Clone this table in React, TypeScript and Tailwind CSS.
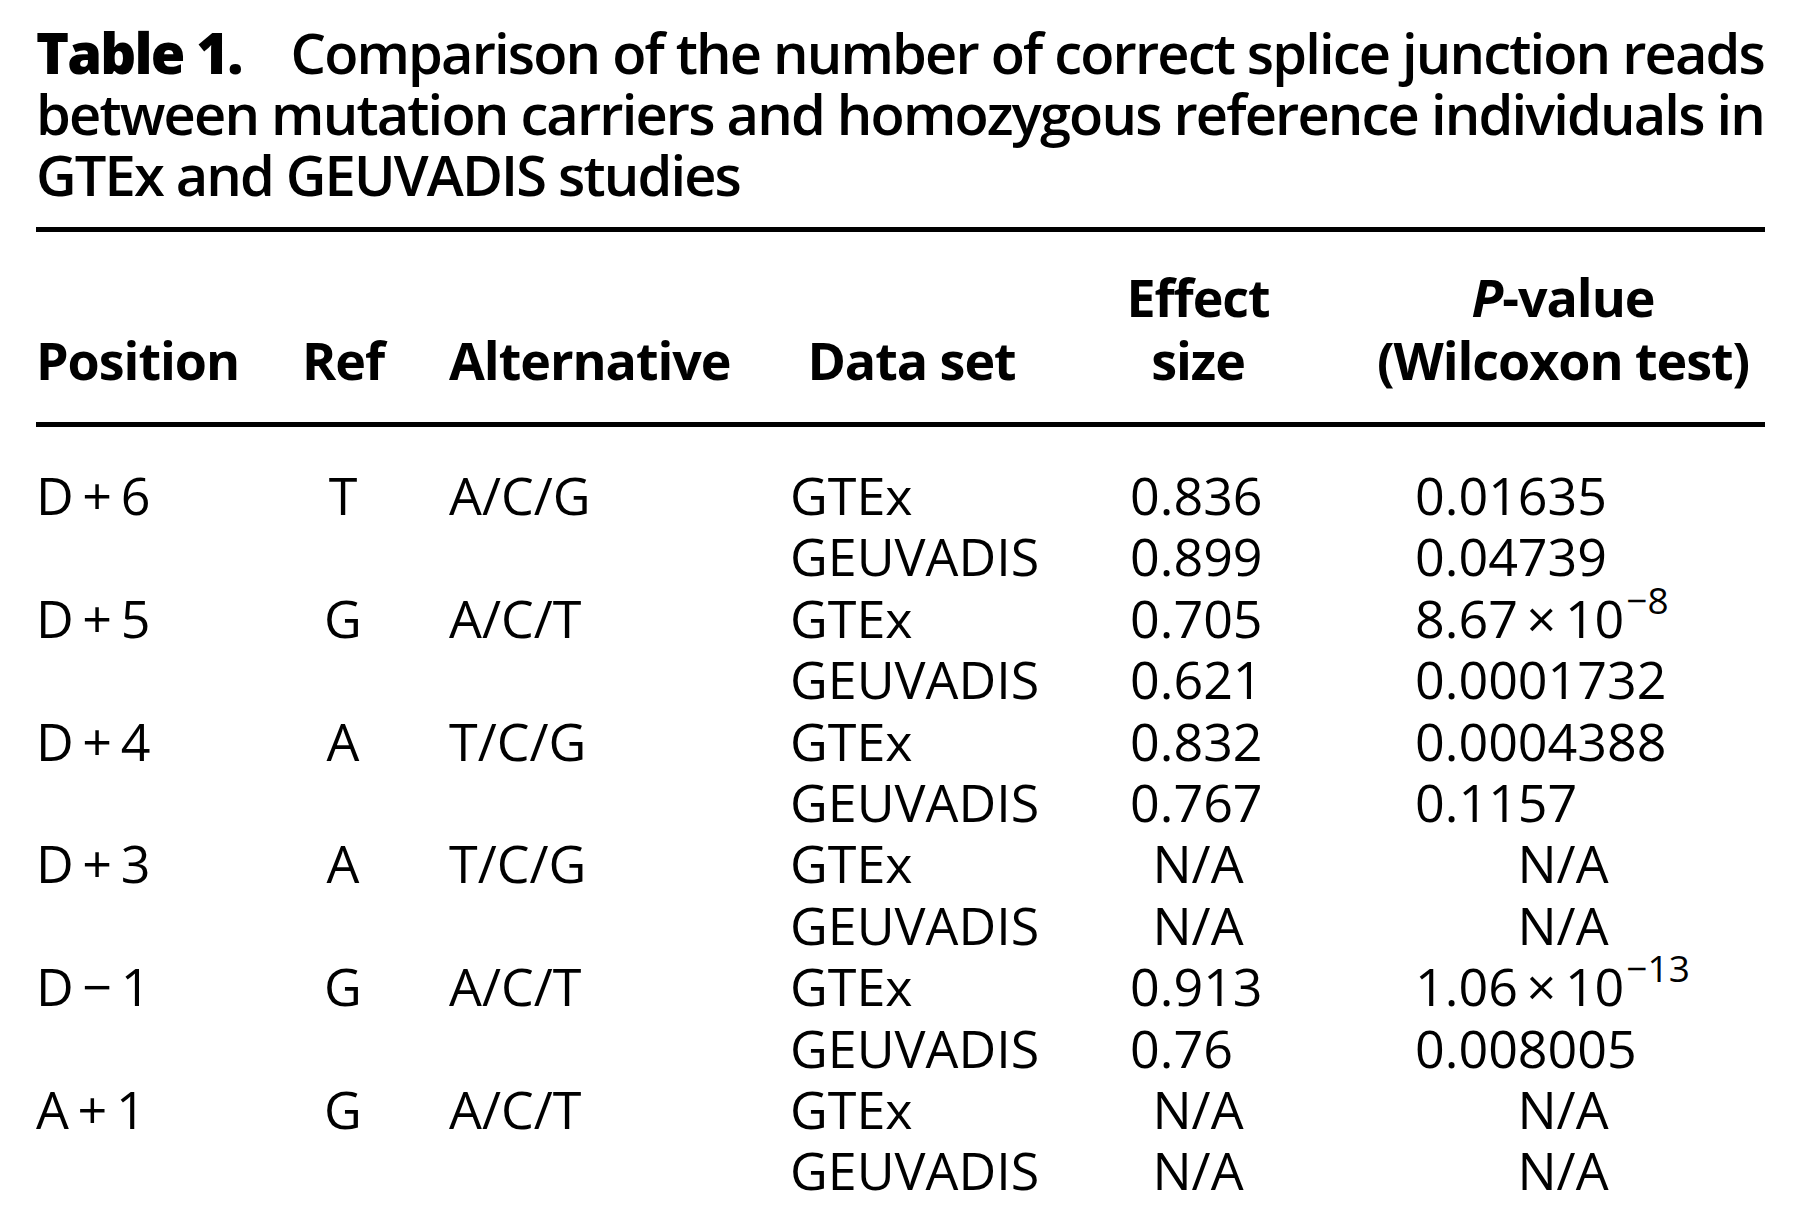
import type { ReactNode } from "react";

type Cell = { effect: string; p: ReactNode };
type Row = { pos: string; ref: string; alt: string; gtex: Cell; geuvadis: Cell };

const T = "\u2009";

function Sci({ m, e }: { m: string; e: string }) {
  return (
    <span>
      {m}
      {T}×{T}10
      <sup className="top-[-24px] ml-[2px] text-[37px]">{e}</sup>
    </span>
  );
}

const ROWS: Row[] = [
  { pos: `D${T}+${T}6`, ref: "T", alt: "A/C/G", gtex: { effect: "0.836", p: "0.01635" }, geuvadis: { effect: "0.899", p: "0.04739" } },
  { pos: `D${T}+${T}5`, ref: "G", alt: "A/C/T", gtex: { effect: "0.705", p: <Sci m="8.67" e="−8" /> }, geuvadis: { effect: "0.621", p: "0.0001732" } },
  { pos: `D${T}+${T}4`, ref: "A", alt: "T/C/G", gtex: { effect: "0.832", p: "0.0004388" }, geuvadis: { effect: "0.767", p: "0.1157" } },
  { pos: `D${T}+${T}3`, ref: "A", alt: "T/C/G", gtex: { effect: "N/A", p: "N/A" }, geuvadis: { effect: "N/A", p: "N/A" } },
  { pos: `D${T}−${T}1`, ref: "G", alt: "A/C/T", gtex: { effect: "0.913", p: <Sci m="1.06" e="−13" /> }, geuvadis: { effect: "0.76", p: "0.008005" } },
  { pos: `A${T}+${T}1`, ref: "G", alt: "A/C/T", gtex: { effect: "N/A", p: "N/A" }, geuvadis: { effect: "N/A", p: "N/A" } },
];

const GRID = "grid grid-cols-[264px_86px_404px_243px_330px_400px]";

function Values({ set, cell }: { set: string; cell: Cell }) {
  const na = cell.effect === "N/A";
  return (
    <>
      <div>{set}</div>
      <div className="flex justify-center">
        <div className={na ? "text-center" : "w-[136px]"}>{cell.effect}</div>
      </div>
      <div className={cell.p === "N/A" ? "text-center" : "pl-[52px]"}>{cell.p}</div>
    </>
  );
}

export default function App() {
  return (
    <div className="min-h-screen w-[1800px] bg-white px-[36px] pt-[22px] font-['Open_Sans',sans-serif] text-black">
      {/* caption, first two lines justified to the rule width */}
      <div className="w-[1728px] text-[56px] leading-[61px] font-semibold tracking-[-0.033em]">
        <div className="whitespace-nowrap [text-align-last:justify]">
          <span className="font-extrabold">Table 1.</span>
          <span className="inline-block w-[36px]" /> Comparison of the number of correct splice junction reads
        </div>
        <div className="whitespace-nowrap [text-align-last:justify]">
          between mutation carriers and homozygous reference individuals in
        </div>
        <div className="whitespace-nowrap">GTEx and GEUVADIS studies</div>
      </div>

      <div className="mt-[22px] h-[5px] w-[1729px] bg-black" />

      <div className={`${GRID} mt-[33px] items-end text-[52px] leading-[63px] font-bold tracking-[-0.02em]`}>
        <div>Position</div>
        <div className="text-center">Ref</div>
        <div className="pl-[63px]">Alternative</div>
        <div className="text-center">Data set</div>
        <div className="text-center">
          Effect
          <br />
          size
        </div>
        <div className="text-center">
          <i>P</i>-value
          <br />
          (Wilcoxon test)
        </div>
      </div>

      <div className="mt-[31px] h-[5px] w-[1729px] bg-black" />

      <div className={`${GRID} mt-[37px] text-[52px] leading-[61.4px]`}>
        {ROWS.map((r) => (
          <div key={r.pos} className="contents">
            <div>{r.pos}</div>
            <div className="text-center">{r.ref}</div>
            <div className="pl-[63px]">{r.alt}</div>
            <Values set="GTEx" cell={r.gtex} />
            <div />
            <div />
            <div />
            <Values set="GEUVADIS" cell={r.geuvadis} />
          </div>
        ))}
      </div>
    </div>
  );
}
